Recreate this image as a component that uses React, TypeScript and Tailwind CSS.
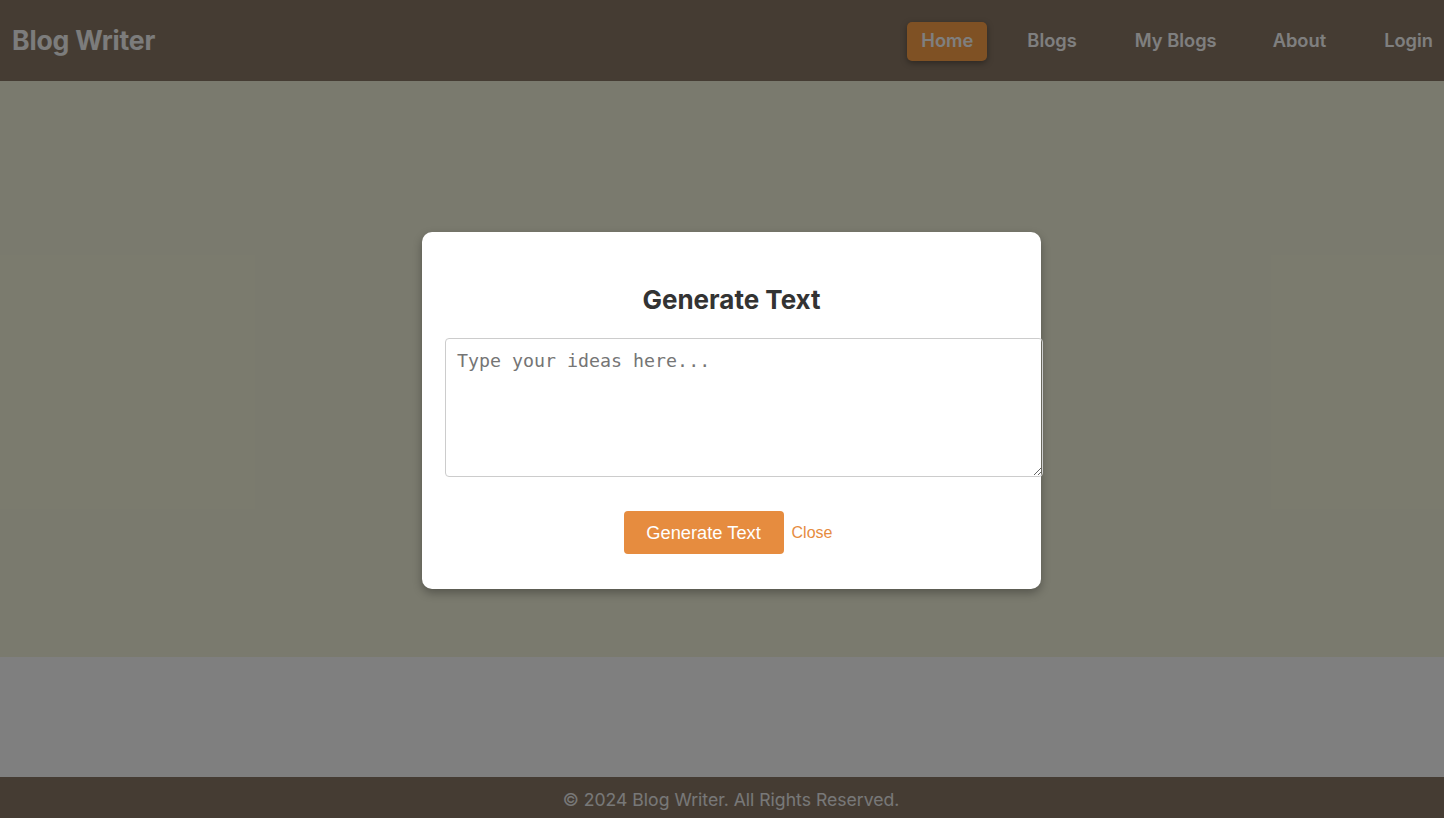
import React from "react";

export default function App() {
  return (
    <div className="relative h-[818px] w-[1444px] overflow-hidden flex flex-col" style={{ fontFamily: "Inter, 'Noto Sans', sans-serif" }}>
      <header className="h-[81px] shrink-0 bg-[#8a7866] flex items-center justify-between pl-[12px]">
        <div className="text-[26.6px] font-bold text-[#f8f8f8] tracking-[-0.2px]">Blog Writer</div>
        <nav className="flex items-center gap-[30px] mr-[-3px] pt-[1px]">
          <a className="px-[14px] h-[39px] mr-[-4px] flex items-center rounded-[5px] bg-[#ffa248] text-white text-[18.3px] font-semibold shadow-[0_2px_6px_rgba(0,0,0,0.35)]">Home</a>
          <a className="px-[14px] text-white text-[18.3px] font-semibold">Blogs</a>
          <a className="px-[14px] text-white text-[18.3px] font-semibold">My Blogs</a>
          <a className="px-[14px] ml-[-2px] text-white text-[18.3px] font-semibold">About</a>
          <a className="px-[14px] text-white text-[18.3px] font-semibold">Login</a>
        </nav>
      </header>
      <main className="h-[576px] shrink-0 bg-[#f5f5dc]"></main>
      <section className="h-[120px] shrink-0 bg-white"></section>
      <footer className="h-[41px] shrink-0 bg-[#8a7866] pt-[12px] pl-[18px] text-center text-[17.6px] leading-[22px] text-[#f0f0f0]">
        © 2024 Blog Writer. All Rights Reserved.
      </footer>

      <div className="absolute inset-0 bg-black/50 flex items-start justify-center">
        <div className="mt-[232px] w-[619px] h-[357px] bg-white rounded-[10px] shadow-[0_4px_10px_rgba(0,0,0,0.3)] pt-[52px] pl-[23px] flex flex-col ml-[19px]">
          <h2 className="text-[26px] leading-[32px] font-bold text-[#333333] text-center w-[573px]">Generate Text</h2>
          <textarea
            placeholder="Type your ideas here..."
            className="mt-[22px] w-[598px] h-[139px] border border-[#cccccc] rounded-[4px] px-[11px] py-[10px] text-[18.3px] leading-[24px] placeholder:text-[#757575] text-[#333] resize-y outline-none"
            style={{ fontFamily: "'DejaVu Sans Mono', 'Liberation Mono', monospace" }}
          />
          <div className="mt-[34px] flex items-center justify-center gap-[8px] w-[573px] pr-[7px]">
            <button className="w-[160px] h-[43px] rounded-[4px] bg-[#e68c3f] text-white text-[18.3px]" style={{ fontFamily: "'Liberation Sans', Arial, sans-serif" }}>
              Generate Text
            </button>
            <button className="text-[#e68c3f] text-[16px]" style={{ fontFamily: "'Liberation Sans', Arial, sans-serif" }}>
              Close
            </button>
          </div>
        </div>
      </div>
    </div>
  );
}
